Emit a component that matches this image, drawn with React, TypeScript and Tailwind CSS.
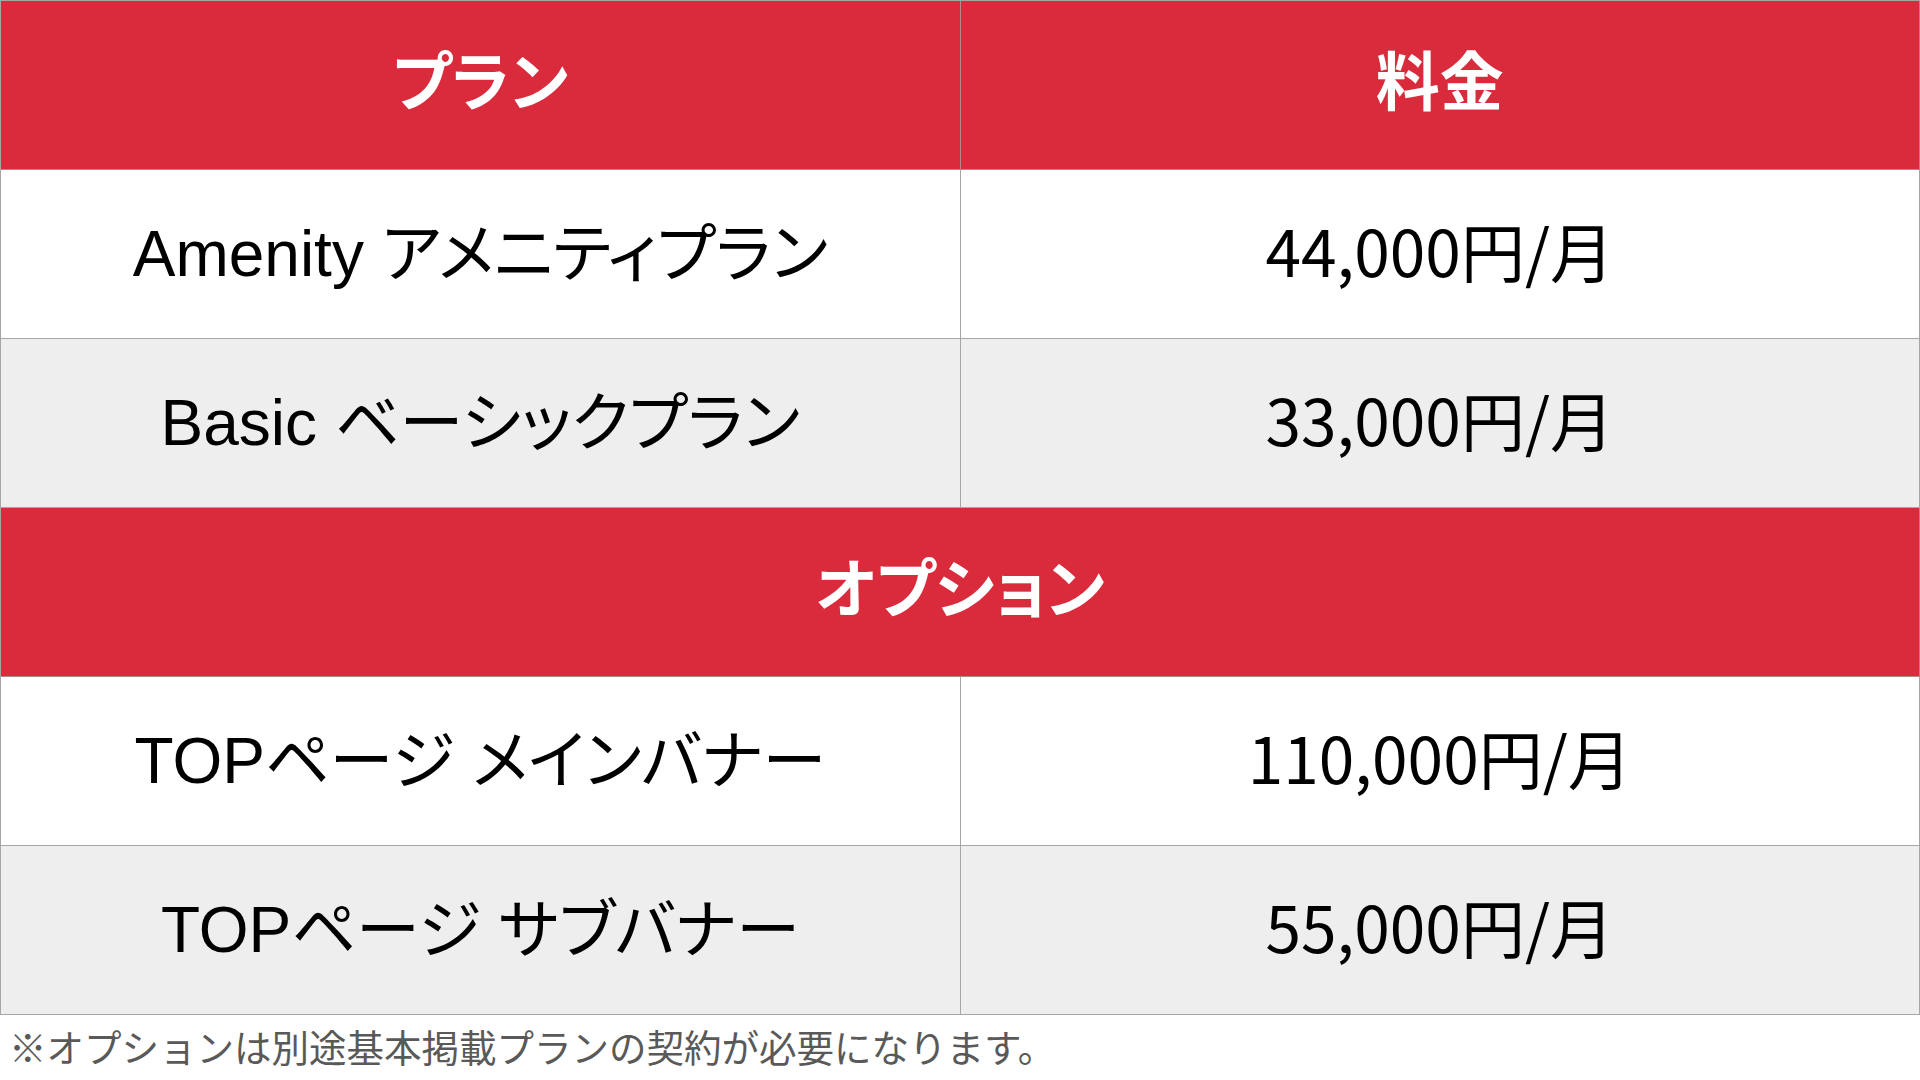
import React from "react";

const latin = "font-['Liberation_Sans','Noto_Sans_CJK_JP',sans-serif] [font-feature-settings:'palt']";
const cjk = "font-['Noto_Sans_CJK_JP',sans-serif]";

function HeadCell({ children, full }: { children: React.ReactNode; full?: boolean }) {
  return (
    <div
      className={`${full ? "col-span-2" : ""} flex items-center justify-center bg-[#d92b3b] border-r border-b border-[#b5868b] text-white font-bold text-[64px] leading-none ${latin}`}
    >
      <span className="pb-[4px]">{children}</span>
    </div>
  );
}

function Row({ name, price, gray }: { name: string; price: string; gray?: boolean }) {
  const bg = gray ? "bg-[#eeeeee]" : "bg-white";
  return (
    <>
      <div className={`${bg} flex items-center justify-center border-r border-b border-[#a6a6a6] text-black text-[64px] leading-none ${latin}`}>
        <span>{name}</span>
      </div>
      <div className={`${bg} flex items-center justify-center border-r border-b border-[#a6a6a6] text-black text-[64px] leading-none ${cjk}`}>
        <span className="pb-[10px]">{price}</span>
      </div>
    </>
  );
}

export default function App() {
  return (
    <div className="w-[1920px] h-[1080px] bg-white overflow-hidden">
      <div className="grid grid-cols-2 grid-rows-[169px_169px_169px_169px_169px_169px] border-l border-t border-[#a6a6a6]">
        <HeadCell>プラン</HeadCell>
        <HeadCell>料金</HeadCell>
        <Row name="Amenity アメニティプラン" price="44,000円/月" />
        <Row name="Basic ベーシックプラン" price="33,000円/月" gray />
        <HeadCell full>オプション</HeadCell>
        <Row name="TOPページ メインバナー" price="110,000円/月" />
        <Row name="TOPページ サブバナー" price="55,000円/月" gray />
      </div>
      <div className={`pl-[9px] pt-[7px] text-[37.5px] leading-[48px] text-[#595959] ${cjk}`}>
        ※オプションは別途基本掲載プランの契約が必要になります。
      </div>
    </div>
  );
}
